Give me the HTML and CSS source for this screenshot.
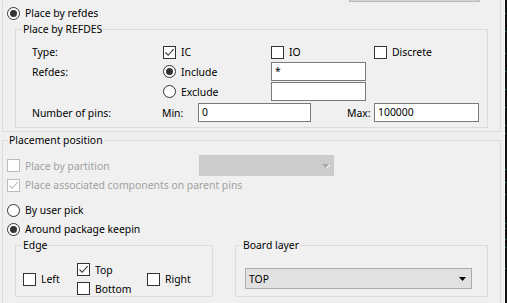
FILE: index.html
```html
<!DOCTYPE html>
<html>
<head>
<meta charset="utf-8">
<link rel="stylesheet" href="styles.css">
</head>
<body>
<div class="topbtn"></div>
<div class="edge-strip">
  <svg width="3" height="303" viewBox="0 0 3 303">
    <rect x="0" y="0" width="1" height="303" fill="#fbfbfb"/>
    <rect x="1" y="0" width="2" height="303" fill="#101010"/>
    <g fill="#2fa3b3">
      <rect x="1" y="13" width="1" height="1"/><rect x="1" y="31" width="1" height="1"/>
      <rect x="1" y="53" width="1" height="1"/><rect x="1" y="71" width="1" height="1"/>
      <rect x="1" y="89" width="1" height="1"/><rect x="1" y="107" width="1" height="1"/>
      <rect x="1" y="125" width="1" height="1"/><rect x="1" y="133" width="1" height="1"/>
      <rect x="1" y="169" width="1" height="1"/><rect x="1" y="182" width="1" height="1"/>
      <rect x="1" y="194" width="1" height="1"/><rect x="1" y="223" width="1" height="1"/>
      <rect x="1" y="228" width="1" height="1"/><rect x="1" y="239" width="1" height="1"/>
      <rect x="1" y="247" width="1" height="1"/><rect x="1" y="268" width="1" height="1"/>
    </g>
  </svg>
</div>

<div class="grp1">
  <div class="row main-radio">
    <span class="radio on"></span><span>Place by refdes</span>
  </div>
  <div class="grp inner">
    <div class="gtitle">Place by REFDES</div>
    <div class="frow f-type">
      <span class="w-lbl">Type:</span>
      <span class="opt w-ic"><span class="chk"><svg width="11" height="11" viewBox="0 0 11 11"><path d="M1.5 5.5 L4.2 8.3 L9.6 2.2" fill="none" stroke="#333" stroke-width="1.1"/></svg></span>IC</span>
      <span class="opt w-io"><span class="chk"></span>IO</span>
      <span class="opt"><span class="chk"></span>Discrete</span>
    </div>
    <div class="frow f-inc">
      <span class="w-lbl">Refdes:</span>
      <span class="opt w-ic"><span class="radio on"></span>Include</span>
      <span class="inp w-inp">*</span>
    </div>
    <div class="frow f-exc">
      <span class="w-lbl"></span>
      <span class="opt w-ic"><span class="radio"></span>Exclude</span>
      <span class="inp w-inp"></span>
    </div>
    <div class="frow f-pins">
      <span class="w-lbl2">Number of pins:</span>
      <span class="w-min">Min:</span>
      <span class="inp w-mininp">0</span>
      <span class="w-max">Max:</span>
      <span class="inp w-maxinp">100000</span>
    </div>
  </div>
</div>

<div class="grp grp2">
  <div class="gtitle t-outer">Placement position</div>
  <div class="prow p-part">
    <span class="opt dis w-part"><span class="chk dis"></span>Place by partition</span>
    <span class="combo-dis">
      <svg width="9" height="6" viewBox="0 0 9 6"><path d="M1 1 H8 L4.5 4.5 Z" fill="#a8a8a8"/><path d="M8 1 L4.5 4.5" stroke="#fff" stroke-width="1" fill="none" transform="translate(1,1)"/></svg>
    </span>
  </div>
  <div class="prow p-assoc">
    <span class="opt dis"><span class="chk dis"><svg width="11" height="11" viewBox="0 0 11 11"><path d="M1.5 5.5 L4.2 8.3 L9.6 2.2" fill="none" stroke="#bcbcbc" stroke-width="1.1"/></svg></span>Place associated components on parent pins</span>
  </div>
  <div class="prow p-pick">
    <span class="opt"><span class="radio"></span>By user pick</span>
  </div>
  <div class="prow p-keep">
    <span class="opt"><span class="radio on"></span>Around package keepin</span>
  </div>
  <div class="subgroups">
    <div class="grp g-edge">
      <div class="gtitle">Edge</div>
      <div class="edge-body">
        <div class="ecol c1"><span class="opt"><span class="chk"></span>Left</span></div>
        <div class="ecol c2">
          <span class="opt eitem"><span class="chk"><svg width="11" height="11" viewBox="0 0 11 11"><path d="M1.5 5.5 L4.2 8.3 L9.6 2.2" fill="none" stroke="#333" stroke-width="1.1"/></svg></span>Top</span>
          <span class="opt eitem"><span class="chk"></span>Bottom</span>
        </div>
        <div class="ecol"><span class="opt"><span class="chk"></span>Right</span></div>
      </div>
    </div>
    <div class="grp g-board">
      <div class="gtitle">Board layer</div>
      <div class="combo">
        <span>TOP</span>
        <svg width="7" height="4" viewBox="0 0 7 4"><path d="M0 0 H7 L3.5 4 Z" fill="#000"/></svg>
      </div>
    </div>
  </div>
</div>
</body>
</html>
```

FILE: styles.css
```css
* { box-sizing: border-box; }
html, body { margin: 0; padding: 0; }
body {
  background: #f0f0f0;
  font-family: "Noto Sans", sans-serif;
  font-size: 10.4px;
  line-height: 16px;
  color: #000;
  width: 507px;
  height: 303px;
  overflow: hidden;
  position: relative;
}

.topbtn {
  position: absolute;
  left: 349px;
  top: -20px;
  width: 131px;
  height: 22px;
  background: #d4d4d4;
  border: 1px solid #b9b9b9;
}
.edge-strip {
  position: absolute;
  right: 0;
  top: 0;
  width: 3px;
  height: 303px;
}
.edge-strip svg { display: block; }

.grp { border: 1px solid #dcdcdc; }
.gtitle {
  width: max-content;
  margin: -9px 0 0 6px;
  padding: 0 1px;
  background: #f0f0f0;
  line-height: 16px;
}

.grp1 {
  margin-left: 2px;
  width: 499px;
  height: 132px;
  border: 1px solid #dcdcdc;
  border-top: none;
  padding: 5px 0 0 4px;
}
.row, .frow, .prow, .opt { display: flex; align-items: center; }
.main-radio { height: 16px; gap: 5px; }

.radio {
  flex: none;
  width: 13px;
  height: 13px;
  border: 1px solid #333;
  border-radius: 50%;
  background: #fff;
  display: flex;
  align-items: center;
  justify-content: center;
}
.radio.on::after {
  content: "";
  width: 7px;
  height: 7px;
  border-radius: 50%;
  background: #333;
}
.chk {
  flex: none;
  width: 13px;
  height: 13px;
  border: 1px solid #333;
  background: #fff;
}
.chk svg { display: block; }
.chk.dis { border-color: #bcbcbc; }
.opt { gap: 5px; white-space: nowrap; }
.opt.dis { color: #a0a0a0; }

.inner {
  margin: 8px 0 0 8px;
  width: 473px;
  height: 99px;
}
.frow { margin-left: 16px; }
.f-type { margin-top: 5px; height: 20px; }
.f-inc { height: 19px; }
.f-exc { margin-top: 1px; height: 19px; }
.f-pins { margin-top: 2px; height: 19px; }
.w-lbl { width: 131px; flex: none; }
.w-ic { width: 108px; flex: none; }
.w-io { width: 103px; flex: none; }
.w-lbl2 { width: 130px; flex: none; }
.w-min { width: 36px; flex: none; }
.w-max { width: 27px; flex: none; margin-left: 36px; }
.inp {
  flex: none;
  height: 19px;
  border: 1px solid #7a7a7a;
  background: #fff;
  padding: 0 0 0 3px;
  line-height: 17px;
}
.w-inp { width: 95px; }
.w-mininp { width: 113px; }
.w-maxinp { width: 105px; }

.grp2 {
  margin: 8px 0 0 2px;
  width: 499px;
  height: 200px;
}
.t-outer { margin-left: 5px; }
.prow { padding-left: 4px; }
.p-part { margin-top: 7px; height: 21px; }
.w-part { width: 192px; flex: none; }
.combo-dis {
  width: 135px;
  height: 21px;
  background: #cccccc;
  display: flex;
  align-items: center;
  justify-content: flex-end;
  padding-right: 4px;
}
.combo-dis svg { display: block; }
.p-assoc { margin-top: 1px; height: 16px; }
.p-pick { margin-top: 9px; height: 16px; }
.p-keep { margin-top: 3px; height: 16px; }

.subgroups {
  display: flex;
  gap: 22px;
  margin-top: 8px;
  padding-left: 12px;
}
.g-edge { width: 198px; height: 52px; flex: none; }
.g-board { width: 253px; height: 52px; flex: none; }
.edge-body {
  display: flex;
  align-items: center;
  margin-top: 8px;
  padding-left: 7px;
}
.ecol.c1 { width: 54px; flex: none; }
.ecol.c2 { width: 70px; flex: none; display: flex; flex-direction: column; gap: 2px; }
.eitem { height: 17px; }

.combo {
  margin: 15px 0 0 9px;
  width: 227px;
  height: 21px;
  background: #e1e1e1;
  border: 1px solid #adadad;
  display: flex;
  align-items: center;
  justify-content: space-between;
  padding: 0 5px 0 3px;
}
.combo svg { display: block; }
```
